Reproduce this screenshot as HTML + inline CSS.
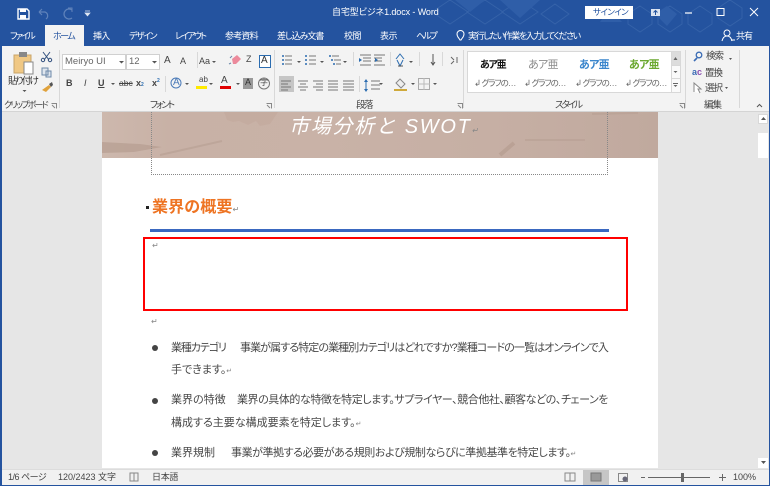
<!DOCTYPE html>
<html lang="ja"><head><meta charset="utf-8"><style>
html,body{margin:0;padding:0}
body{width:770px;height:486px;overflow:hidden;position:relative;background:#e6e6e6;font-family:"Liberation Sans","Noto Sans CJK JP",sans-serif;color:#444;font-feature-settings:"palt"}
.a,.t{position:absolute}
.t{white-space:nowrap;line-height:1}
.w{color:#fff}
.b{font-size:11px;color:#484848}
.r{font-size:7px;color:#888}
.tb{font-size:9px;top:32px;color:#fff}
.g{top:79px;font-size:8.500px;color:#666;letter-spacing:-1px}
.l{top:101px;font-size:9.500px}
svg{position:absolute;left:0;top:0}
</style></head><body>
<div class="a" style="left:0;top:0;width:770px;height:46px;background:#24539f"></div>
<svg width="770" height="46"><g fill="none" stroke="#3a66ab" stroke-width="1" opacity=".8">
<path d="M450 0l18 12-18 12-18-12zM485 0l18 12-18 12-18-12zM520 0l18 12-18 12-18-12zM555 4l14 10-14 10-14-10zM640 6l12 8v10l-12 8-12-8V14zM670 6l12 8v10l-12 8-12-8V14zM700 6l12 8v10l-12 8-12-8V14zM730 0l12 8v10l-12 8-12-8V8z"/></g>
<g fill="#2f5ea8"><path d="M455 0h30l-15 12zM500 0h40l-20 18zM600 22l10-14 12 14zM655 14l12-8 10 8-10 12z"/></g></svg>
<!-- QAT -->
<svg width="120" height="26"><path d="M18 9h9l2 2v8H18z" fill="none" stroke="#fff" stroke-width="1.400"/><path d="M20 9h6v3h-6zM20 15h6v4h-6z" fill="#fff"/>
<path d="M39 12h6a4 4 0 0 1 1 7M39 12l3-3M39 12l3 3" fill="none" stroke="#5f82ba" stroke-width="1.200"/><path d="M72 10a5 5 0 1 0 0 8" fill="none" stroke="#5f82ba" stroke-width="1.300"/><path d="M68 8h4v4" fill="none" stroke="#5f82ba" stroke-width="1"/>
<path d="M85 11h5M85 13l2.500 3 2.500-3z" fill="#dfe7f3" stroke="#dfe7f3" stroke-width=".7"/></svg>
<div class="t w" style="left:332px;top:8px;font-size:9px;letter-spacing:-.1px">自宅型ビジネ1.docx - Word</div>
<div class="a" style="left:585px;top:6px;width:48px;height:13px;background:#fff"></div>
<div class="t" style="left:593px;top:8px;font-size:8.500px;color:#24539f;letter-spacing:-.6px">サインイン</div>
<svg width="770" height="26"><rect x="651" y="9" width="9" height="7" fill="#dbe4f1"/><path d="M655.500 15v-4M653.500 12.500l2-2 2 2" stroke="#24539f" fill="none"/><path d="M685 13h7" stroke="#fff" stroke-width="1.200"/><rect x="717" y="8.500" width="7" height="7" fill="none" stroke="#fff"/><path d="M750 8l8 8M758 8l-8 8" stroke="#fff" stroke-width="1"/></svg>
<!-- Tabs -->
<div class="a" style="left:45px;top:25px;width:39px;height:22px;background:#f3f3f3"></div>
<div class="t tb" style="left:10px;letter-spacing:-1.800px">ファイル</div>
<div class="t tb" style="left:53px;color:#24539f;letter-spacing:-1.500px">ホーム</div>
<div class="t tb" style="left:93px;letter-spacing:-.8px">挿入</div>
<div class="t tb" style="left:129px;letter-spacing:-1.500px">デザイン</div>
<div class="t tb" style="left:175px;letter-spacing:-1.800px">レイアウト</div>
<div class="t tb" style="left:225px;letter-spacing:-.8px">参考資料</div>
<div class="t tb" style="left:277px;letter-spacing:-1px">差し込み文書</div>
<div class="t tb" style="left:344px;letter-spacing:-.5px">校閲</div>
<div class="t tb" style="left:380px;letter-spacing:-.5px">表示</div>
<div class="t tb" style="left:416px;letter-spacing:-2px">ヘルプ</div>
<div class="t tb" style="left:468px;letter-spacing:-1.400px">実行したい作業を入力してください</div>
<svg width="770" height="46"><path d="M460 40c-1-2-3-3-3-6a3.500 3.500 0 0 1 7 0c0 3-2 4-3 6z" fill="none" stroke="#fff"/><circle cx="727" cy="33" r="3" fill="none" stroke="#fff"/><path d="M722 41c1-4 3-5 5-5s4 1 5 5M731 40h4" fill="none" stroke="#fff"/></svg>
<div class="t tb" style="left:736px;letter-spacing:-1px">共有</div>
<!-- Ribbon -->
<div class="a" style="left:0;top:46px;width:770px;height:66px;background:#f3f3f3;border-bottom:1px solid #d4d4d4;box-sizing:border-box"></div>
<div class="a" style="left:62px;top:54px;width:64px;height:16px;background:#fff;border:1px solid #d0d0d0;box-sizing:border-box"></div>
<div class="a" style="left:126px;top:54px;width:34px;height:16px;background:#fff;border:1px solid #d0d0d0;box-sizing:border-box"></div>
<div class="t" style="left:65px;top:57px;font-size:9.500px;color:#666">Meiryo UI</div>
<div class="t" style="left:129px;top:57px;font-size:9.500px;color:#666">12</div>
<div class="a" style="left:279px;top:76px;width:15px;height:16px;background:#c6c6c6"></div>
<div class="a" style="left:467px;top:51px;width:205px;height:42px;background:#fff;border:1px solid #d8d8d8;box-sizing:border-box"></div>
<div class="a" style="left:671px;top:51px;width:10px;height:42px;background:#fafafa;border:1px solid #d8d8d8;box-sizing:border-box"></div>
<div class="a" style="left:672px;top:52px;width:8px;height:13px;background:#dcdcdc"></div>
<svg width="770" height="112" fill="none">
<!-- separators -->
<path d="M59.500 50v58M274.500 50v58M463.500 50v58M685.500 50v58M739.500 50v58M197.500 52v16M165.500 76v16M353.500 52v14M390.500 52v14M419.500 52v14M442.500 52v14M359.500 76v16" stroke="#d8d8d8"/>
<!-- paste -->
<rect x="14" y="55" width="17" height="18" fill="#f0c884" stroke="#c9a468"/><rect x="19" y="52" width="8" height="5" fill="#888"/><path d="M24 62h9v12H24z" fill="#fff" stroke="#888"/>
<path d="M43 52l6 8M50 52l-6 8" stroke="#33517f"/><circle cx="43" cy="60" r="1.700" stroke="#33517f"/><circle cx="50" cy="60" r="1.700" stroke="#33517f"/>
<path d="M42 68h6v7h-6zM46 71h5v6h-5z" stroke="#6c88a8" fill="#dfe6ee"/><path d="M42 90l7-5 2 2-5 5z" fill="#e0a23c"/><path d="M49 84l3-2 1 3-2 2z" fill="#555"/>
<path d="M22.500 90l2 2 2-2z" fill="#555"/>
<!-- dropdown arrows -->
<path d="M119 61h5l-2.500 2.500zM152 61h5l-2.500 2.500zM212 61h4l-2 2zM111 83h4l-2 2zM185 83h4l-2 2zM209 83h4l-2 2zM236 83h4l-2 2zM297 61h4l-2 2zM320 61h4l-2 2zM343 61h4l-2 2zM409 61h4l-2 2zM379 83h4l-2 2zM411 83h4l-2 2zM433 83h4l-2 2zM729 58h3l-1.500 2zM725 87h3l-1.500 2z" fill="#555"/>
<!-- font tools -->
<path d="M232 59l5-4 4 4-5 5-3 0z" fill="#ec8a9c"/><path d="M230 58l2-2M229 64l2-1" stroke="#6c88a8"/>
<rect x="259.500" y="55.500" width="11" height="12" fill="#fff" stroke="#2b6cb0"/>
<!-- underlines -->
<path d="M196 87.500h11" stroke="#ffea00" stroke-width="3"/><path d="M220 87.500h11" stroke="#e00000" stroke-width="3"/>
<circle cx="176" cy="83" r="5" stroke="#4a7ab8"/>
<rect x="243" y="78" width="10" height="11" fill="#999"/><circle cx="264" cy="83.500" r="5.500" stroke="#777"/>
<!-- paragraph icons -->
<g stroke="#777"><path d="M285 56h7M285 60h7M285 64h7M309 56h7M309 60h7M309 64h7M332 56h7M334 60h7M336 64h5M360 55h11M363 58h8M363 61h8M360 65h11M374 55h11M374 58h8M374 61h8M374 65h11M281 81h10M281 84h7M281 87h10M281 90h7M298 81h10M300 84h6M298 87h10M300 90h6M313 81h10M316 84h7M313 87h10M316 90h7M328 81h10M328 84h10M328 87h10M328 90h10M343 81h11M343 84h11M343 87h11M343 90h11M371 81h9M371 85h9M371 89h9"/></g>
<g fill="#2b6cb0"><circle cx="283" cy="56" r="1"/><circle cx="283" cy="60" r="1"/><circle cx="283" cy="64" r="1"/><circle cx="306" cy="56" r="1"/><circle cx="306" cy="60" r="1"/><circle cx="306" cy="64" r="1"/><circle cx="330" cy="56" r="1"/><circle cx="332" cy="60" r="1"/><circle cx="334" cy="64" r="1"/><path d="M359 58l3 2-3 2zM375 58l3 2-3 2zM366 79l-2 3h4zM366 92l-2-3h4z"/></g>
<path d="M366 82v7" stroke="#2b6cb0"/>
<path d="M396 59l4-5 4 5M397 60l3 6 3-6" stroke="#2b6cb0"/><path d="M398 66h5" stroke="#555"/>
<path d="M433 64v-10M431 62l2 3 2-3" stroke="#555"/><path d="M451 57l3 3M451 64l3-3M457 57v6" stroke="#666"/>
<path d="M396 83l4-4 5 5-4 4z" stroke="#888" fill="#eee"/><path d="M394 90h13" stroke="#cfa93a" stroke-width="2"/>
<rect x="418.500" y="78.500" width="11" height="11" stroke="#aaa"/><path d="M424 78v12M418 84h12" stroke="#bbb"/>
<!-- dialog launchers -->
<path d="M51.500 103.500h5v5M55 108l-3-3M266.500 103.500h5v5M270 108l-3-3M457.500 103.500h5v5M461 108l-3-3M679.500 103.500h5v5M683 108l-3-3" stroke="#888"/>
<!-- gallery arrows -->
<path d="M673.500 60l2-3 2 3zM673.500 71h4l-2 2zM673.500 85h4l-2 2z" fill="#666" stroke="none"/><path d="M673 83.500h5" stroke="#666"/>
<path d="M671 65.500h9M671 78.500h9" stroke="#d8d8d8"/>
<!-- edit icons -->
<circle cx="699" cy="55" r="2.800" stroke="#3b6cb5" stroke-width="1.300"/><path d="M697 58l-3 3" stroke="#3b6cb5" stroke-width="1.600"/>
<path d="M694 92v-9l7 6-3 0 2 4" stroke="#888" fill="#fff"/>
<path d="M757 107l2.500-2.500 2.500 2.500" stroke="#555"/>
</svg>
<div class="t" style="left:8px;top:76.500px;font-size:9.500px;color:#333;letter-spacing:-1.800px">貼り付け</div>
<div class="t" style="left:4px;top:101px;font-size:9px;letter-spacing:-1.800px">クリップボード</div>
<div class="t l" style="left:150px;letter-spacing:-2px">フォント</div>
<div class="t l" style="left:356px;letter-spacing:-1.500px">段落</div>
<div class="t l" style="left:555px;letter-spacing:-2px">スタイル</div>
<div class="t l" style="left:704px;letter-spacing:-1px">編集</div>
<div class="t" style="left:164px;top:56px;font-size:10px">A</div>
<div class="t" style="left:180px;top:57px;font-size:9px">A</div>
<div class="t" style="left:199px;top:57px;font-size:9px">Aa</div>
<div class="t" style="left:246px;top:55px;font-size:9px">Z</div>
<div class="t" style="left:261px;top:56px;font-size:10px;color:#333">A</div>
<div class="t" style="left:66px;top:79px;font-size:9px;font-weight:bold">B</div>
<div class="t" style="left:84px;top:79px;font-size:9px;font-style:italic">I</div>
<div class="t" style="left:98px;top:79px;font-size:9px;font-weight:bold;text-decoration:underline">U</div>
<div class="t" style="left:119px;top:79px;font-size:8.500px;text-decoration:line-through">abc</div>
<div class="t" style="left:136px;top:79px;font-size:9px;font-weight:bold">x<span style="font-size:5px;color:#2b6cb0">2</span></div>
<div class="t" style="left:152px;top:79px;font-size:9px;font-weight:bold">x<span style="font-size:5px;vertical-align:4px;color:#2b6cb0">2</span></div>
<div class="t" style="left:173px;top:78px;font-size:10px;color:#4a7ab8">A</div>
<div class="t" style="left:199px;top:76px;font-size:8px">ab</div>
<div class="t" style="left:221px;top:76px;font-size:10px">A</div>
<div class="t" style="left:245px;top:78px;font-size:9px;color:#333">A</div>
<div class="t" style="left:260px;top:79px;font-size:8px">字</div>
<div class="t" style="left:480px;top:61px;font-size:10px;color:#111;font-weight:bold;letter-spacing:-1.300px">あア亜</div>
<div class="t" style="left:528px;top:60px;font-size:11px;color:#8a8a8a;letter-spacing:-.7px">あア亜</div>
<div class="t" style="left:579px;top:60px;font-size:11px;color:#3a85cc;font-weight:bold;letter-spacing:-.7px">あア亜</div>
<div class="t" style="left:629px;top:60px;font-size:11px;color:#6aa82e;font-weight:bold;letter-spacing:-.7px">あア亜</div>
<div class="t g" style="left:474px">↲ グラフの…</div>
<div class="t g" style="left:524px">↲ グラフの…</div>
<div class="t g" style="left:575px">↲ グラフの…</div>
<div class="t g" style="left:625px">↲ グラフの…</div>
<div class="t" style="left:706px;top:52px;font-size:9.500px;letter-spacing:-1px">検索</div>
<div class="t" style="left:705px;top:69px;font-size:9.500px;letter-spacing:-1px">置換</div>
<div class="t" style="left:705px;top:84px;font-size:9.500px;letter-spacing:-1px">選択</div>
<div class="t" style="left:692px;top:68px;font-size:9px;font-weight:bold;color:#3b6cb5">a<span style="color:#8a4fb0">c</span></div>
<!-- Document -->
<div class="a" style="left:102px;top:112px;width:556px;height:356px;background:#fff"></div>
<div class="a" style="left:102px;top:112px;width:556px;height:46px;background:linear-gradient(90deg,#cdb8ad 0,#c8b1a6 12%,#c9b2a7 40%,#c6afa4 70%,#c0a99e 100%)"></div>
<svg width="770" height="160" style="opacity:.6"><path d="M102 142l38 2 22 3-28 5-32 1z" fill="#b39a8d"/><path d="M224 112l3 8 6 2 6-1 9 4 8-4 4 5 10-2 8-12z" fill="#c0a598" opacity=".7"/><path d="M160 155l62-14" stroke="#b79f93" stroke-width="2" fill="none"/><path d="M500 155l14-12" stroke="#b39a8d" stroke-width="4" fill="none"/><path d="M525 140h60M592 114l46-1" stroke="#b8a094" stroke-width="2" fill="none"/></svg>
<div class="a" style="left:151px;top:112px;width:457px;height:63px;box-sizing:border-box;border:1px dotted #888;border-top:0"></div>
<div class="t w" style="left:289px;top:117px;font-size:20px;font-style:italic;letter-spacing:1.700px;font-feature-settings:normal">市場分析と SWOT<span style="font-size:8px;color:#888">↵</span></div>
<div class="a" style="left:146px;top:206px;width:3px;height:3px;background:#222"></div>
<div class="t" style="left:152px;top:200px;font-size:16px;font-weight:bold;color:#ee7423;letter-spacing:.1px;font-feature-settings:normal">業界の概要<span style="font-size:8px;color:#888;font-weight:normal">↵</span></div>
<div class="a" style="left:150px;top:229px;width:459px;height:3px;background:#3a68c0"></div>
<div class="a" style="left:143px;top:237px;width:485px;height:74px;box-sizing:border-box;border:2px solid #f00"></div>
<div class="t" style="left:152px;top:242px;font-size:8px;color:#888">↵</div>
<div class="t" style="left:151px;top:318px;font-size:8px;color:#888">↵</div>
<div class="t b" style="left:171px;top:343px;letter-spacing:-1.100px">業種カテゴリ</div>
<div class="t b" style="left:240px;top:343px;letter-spacing:-.9px">事業が属する特定の業種別カテゴリはどれですか?業種コードの一覧はオンラインで入</div>
<div class="t b" style="left:171px;top:365px">手できます。<span class="r">↵</span></div>
<div class="t b" style="left:171px;top:395px">業界の特徴</div>
<div class="t b" style="left:237px;top:395px;letter-spacing:-.44px">業界の具体的な特徴を特定します。サプライヤー、競合他社、顧客などの、チェーンを</div>
<div class="t b" style="left:171px;top:418px">構成する主要な構成要素を特定します。<span class="r">↵</span></div>
<div class="t b" style="left:171px;top:448px">業界規制</div>
<div class="t b" style="left:231px;top:448px;letter-spacing:-.43px">事業が準拠する必要がある規則および規制ならびに準拠基準を特定します。<span class="r">↵</span></div>
<div class="a" style="left:152px;top:345px;width:6px;height:6px;border-radius:50%;background:#444"></div>
<div class="a" style="left:152px;top:397.500px;width:6px;height:6px;border-radius:50%;background:#444"></div>
<div class="a" style="left:152px;top:450px;width:6px;height:6px;border-radius:50%;background:#444"></div>
<!-- scrollbar -->
<div class="a" style="left:758px;top:113px;width:11px;height:356px;background:#e6e6e6"></div>
<div class="a" style="left:758px;top:114px;width:10px;height:10px;background:#fff;border:1px solid #d8d8d8;box-sizing:border-box"></div>
<div class="a" style="left:758px;top:133px;width:10px;height:25px;background:#fff"></div>
<div class="a" style="left:758px;top:458px;width:10px;height:10px;background:#fff"></div>
<svg width="770" height="469"><path d="M761 120l2.500-3 2.500 3zM761 461h5l-2.500 3z" fill="#555"/></svg>
<!-- Status bar -->
<div class="a" style="left:0;top:469px;width:770px;height:16px;background:#f1f1f1;border-top:1px solid #dcdcdc;box-sizing:border-box"></div>
<div class="a" style="left:583px;top:470px;width:26px;height:15px;background:#c6c6c6"></div>
<div class="t" style="left:8px;top:473px;font-size:9px;letter-spacing:-.5px">1/6 ページ</div>
<div class="t" style="left:58px;top:473px;font-size:9px">120/2423 文字</div>
<div class="t" style="left:152px;top:473px;font-size:9px;letter-spacing:-.3px">日本語</div>
<div class="t" style="left:733px;top:473px;font-size:9px">100%</div>
<svg width="770" height="486" fill="none"><path d="M130 473h4v8h-4zM134 473h4v8h-4z" stroke="#888"/><path d="M565 473h5v8h-5zM570 473h5v8h-5z" stroke="#888"/><rect x="591" y="473" width="10" height="8" fill="#999" stroke="#777"/><rect x="618.500" y="473.500" width="9" height="8" stroke="#888"/><circle cx="625" cy="479" r="2.500" fill="#667"/><path d="M641 477.500h4M648 477.500h62M719 477.500h7M722.500 474v7" stroke="#666"/><rect x="681" y="473" width="3" height="9" fill="#666"/>
<path d="M769.500 0v486" stroke="#24539f" stroke-width="1"/></svg>
<div class="a" style="left:0;top:485px;width:770px;height:1px;background:#24539f"></div>
<div class="a" style="left:0;top:0;width:2px;height:486px;background:#24539f"></div>
</body></html>
